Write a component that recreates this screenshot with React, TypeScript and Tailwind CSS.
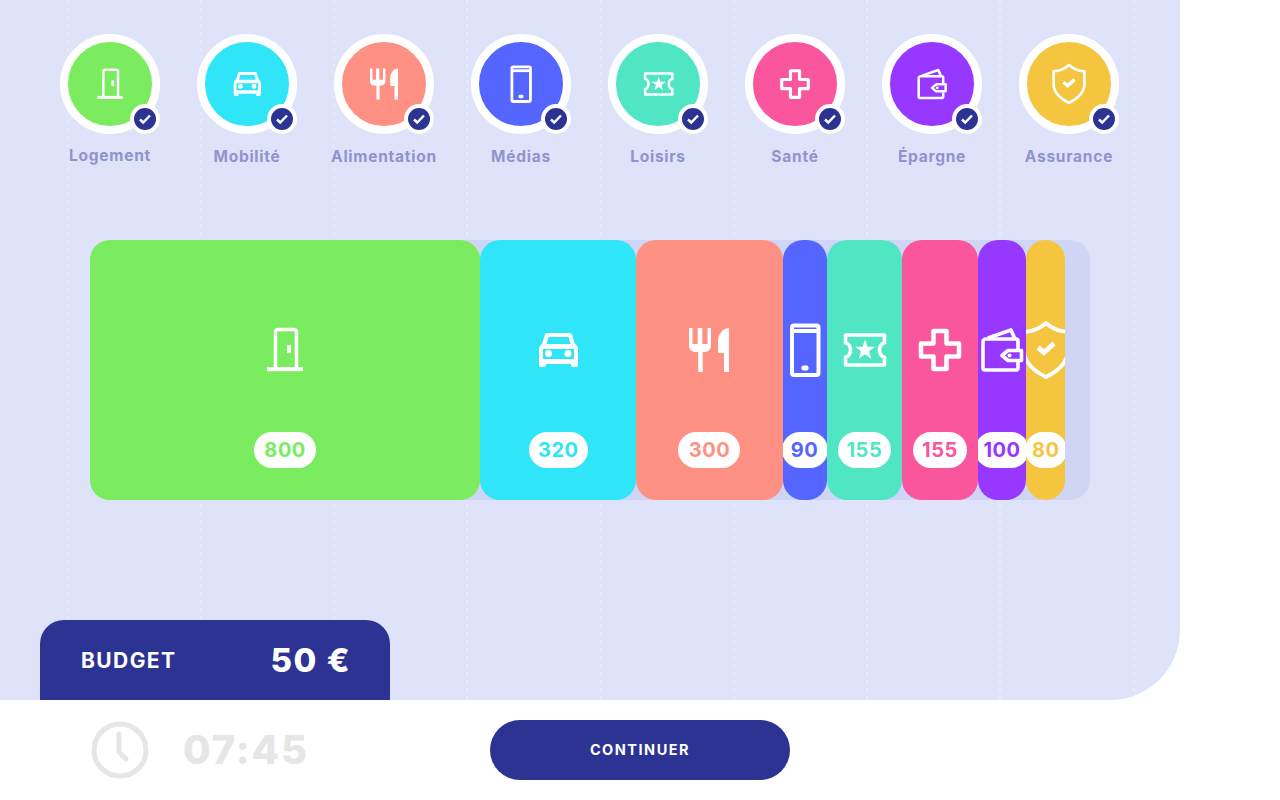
import React from "react";

const FONT = "font-['Inter','Liberation_Sans',sans-serif]";

const DoorIcon = () => (
  <>
    <path d="M20.500 47V12a2.500 2.500 0 0 1 2.500-2.500h16a2.500 2.500 0 0 1 2.500 2.500v35" fill="none" stroke="currentColor" strokeWidth="3.500" />
    <rect x="12" y="47" width="36" height="4.200" fill="currentColor" />
    <rect x="32" y="25" width="4" height="8" fill="currentColor" />
  </>
);

const CarIcon = () => (
  <>
    <path
      fillRule="evenodd"
      fill="currentColor"
      d="M19 13h23a2 2 0 0 1 2 1.500L47 24c2 1 3 3 3 5v16a2 2 0 0 1-2 2h-3a2 2 0 0 1-2-2v-1H18v1a2 2 0 0 1-2 2h-3a2 2 0 0 1-2-2V29c0-2 1-4 3-5l3-9.500A2 2 0 0 1 19 13zM20.500 17l-2 7h24l-2-7zM15 29v10h31V29z"
    />
    <circle cx="20.500" cy="33.500" r="3.500" fill="currentColor" />
    <circle cx="40" cy="33.500" r="3.500" fill="currentColor" />
  </>
);

const CutleryIcon = () => (
  <>
    <path
      fill="currentColor"
      d="M10 8h3.500v16h5.200V8h4.600v16h5.200V8H32v18a6 6 0 0 1-6 6h-2.300v20h-4.500V32H16a6 6 0 0 1-6-6z"
    />
    <path fill="currentColor" d="M50 8v44h-5V33h-6V22c0-8 5-14 11-14z" />
  </>
);

const PhoneIcon = () => (
  <>
    <rect x="17" y="5.500" width="26.500" height="49.500" rx="2" fill="none" stroke="currentColor" strokeWidth="4" />
    <rect x="17" y="9" width="26.500" height="4" fill="currentColor" />
    <rect x="26.500" y="45.500" width="7" height="5" rx="2" fill="currentColor" />
  </>
);

const TicketIcon = () => (
  <>
    <path
      d="M11.500 15h39v8a5 7 0 0 0 0 14v8h-39v-8a5 7 0 0 0 0-14z"
      fill="none"
      stroke="currentColor"
      strokeWidth="3.600"
      strokeLinejoin="round"
    />
    <polygon
      points="31,19.500 33.500,26.800 41,26.800 35,31.300 37.300,38.800 31,34.300 24.700,38.800 27,31.300 21,26.800 28.500,26.800"
      fill="currentColor"
    />
  </>
);

const PlusIcon = () => (
  <path
    d="M23.500 11h13v12.500H49v13H36.500V49h-13V36.500H11v-13h12.500z"
    fill="none"
    stroke="currentColor"
    strokeWidth="4.500"
    strokeLinejoin="round"
  />
);

const WalletIcon = () => (
  <>
    <path
      d="M46 29v-8a2 2 0 0 0-2-2H14a3 3 0 0 0-3 3v26a2 2 0 0 0 2 2h31a2 2 0 0 0 2-2v-6"
      fill="none"
      stroke="currentColor"
      strokeWidth="3.600"
    />
    <path d="M16 18l23-8 4 9" fill="none" stroke="currentColor" strokeWidth="3.600" strokeLinejoin="round" />
    <path
      d="M49.500 30.500H36l-6 5 6 5h13.500z"
      fill="none"
      stroke="currentColor"
      strokeWidth="3.600"
      strokeLinejoin="round"
    />
    <circle cx="37.500" cy="35.500" r="2" fill="currentColor" />
  </>
);

const ShieldIcon = () => (
  <>
    <path
      d="M30 3c6 5.500 14 8.500 22 9v18c0 12-10 21-22 27C18 51 8 42 8 30V12c8-.5 16-3.500 22-9z"
      fill="none"
      stroke="currentColor"
      strokeWidth="3.800"
      strokeLinejoin="round"
    />
    <path d="M22 27.500l6 5 10-9" fill="none" stroke="currentColor" strokeWidth="5" />
  </>
);

const categories = [
  { label: "Logement", value: 800, Icon: DoorIcon, bg: "bg-[#7bec5f]", text: "text-[#7bec5f]", width: "w-[390.24px]", pill: "w-[62px]", labelTop: "mt-[13px]" },
  { label: "Mobilité", value: 320, Icon: CarIcon, bg: "bg-[#2fe5f7]", text: "text-[#2fe5f7]", width: "w-[156.1px]", pill: "w-[59px]", labelTop: "mt-[14px]" },
  { label: "Alimentation", value: 300, Icon: CutleryIcon, bg: "bg-[#ff9084]", text: "text-[#ff9084]", width: "w-[146.34px]", pill: "w-[62px]", labelTop: "mt-[14px]" },
  { label: "Médias", value: 90, Icon: PhoneIcon, bg: "bg-[#5565ff]", text: "text-[#5565ff]", width: "w-[43.9px]", pill: "w-[46px]", labelTop: "mt-[14px]" },
  { label: "Loisirs", value: 155, Icon: TicketIcon, bg: "bg-[#50e6c3]", text: "text-[#50e6c3]", width: "w-[75.6px]", pill: "w-[53px]", labelTop: "mt-[14px]" },
  { label: "Santé", value: 155, Icon: PlusIcon, bg: "bg-[#fa569e]", text: "text-[#fa569e]", width: "w-[75.6px]", pill: "w-[54px]", labelTop: "mt-[14px]" },
  { label: "Épargne", value: 100, Icon: WalletIcon, bg: "bg-[#9638ff]", text: "text-[#9638ff]", width: "w-[48.5px]", pill: "w-[54px]", labelTop: "mt-[14px]" },
  { label: "Assurance", value: 80, Icon: ShieldIcon, bg: "bg-[#f5c53f]", text: "text-[#f5c53f]", width: "w-[39px]", pill: "w-[42px]", labelTop: "mt-[14px]" },
];

const guides = [0, 1, 2, 3, 4, 5, 6, 7, 8];

export default function App() {
  return (
    <div className={`w-[1280px] h-[800px] overflow-hidden bg-white ${FONT}`}>
      <div className="relative w-[1180px] h-[700px] bg-[#dfe3fa] rounded-br-[70px] flex flex-col">
        <div className="absolute inset-0 flex pl-[66.5px] gap-[131.25px]">
          {guides.map((g) => (
            <div
              key={g}
              className="h-full w-[2px] bg-[repeating-linear-gradient(to_bottom,rgba(255,255,255,0.3)_0,rgba(255,255,255,0.3)_3px,transparent_3px,transparent_8px)]"
            />
          ))}
        </div>

        <div className="relative h-[240px] pt-[34px] pl-[41.5px] flex items-start">
          {categories.map(({ label, Icon, bg, labelTop }) => (
            <div key={label} className="w-[137px] flex flex-col items-center">
              <div className={`relative w-[100px] h-[100px] rounded-full border-8 border-white ${bg} flex items-center justify-center text-white`}>
                <svg width="42" height="42" viewBox="0 0 60 60">
                  <Icon />
                </svg>
                <div className="absolute -right-2 -bottom-2 w-[30px] h-[30px] rounded-full border-4 border-white bg-[#2c3393] flex items-center justify-center">
                  <svg width="14" height="14" viewBox="0 0 14 14">
                    <path d="M2 7.500l3.200 3L12 3.500" fill="none" stroke="white" strokeWidth="2.400" />
                  </svg>
                </div>
              </div>
              <span className={`${labelTop} text-[15.5px] leading-[18px] font-bold tracking-[0.75px] text-[#8f93cf] whitespace-nowrap`}>
                {label}
              </span>
            </div>
          ))}
        </div>

        <div className="relative ml-[90px] w-[1000px] h-[260px] bg-[#cfd5f5] rounded-[20px] flex">
          {categories.map(({ label, value, Icon, bg, text, width, pill }) => (
            <div key={label} className={`${width} h-full shrink-0 rounded-[20px] overflow-hidden ${bg} pt-[80px] flex flex-col items-center text-white`}>
              <svg width="60" height="60" viewBox="0 0 60 60" className="shrink-0">
                <Icon />
              </svg>
              <div className={`mt-[52px] h-[36px] ${pill} shrink-0 rounded-full bg-white flex items-center justify-center text-[20px] font-bold tracking-[0.5px] ${text}`}>
                {value}
              </div>
            </div>
          ))}
        </div>

        <div className="relative mt-auto ml-[40px] w-[350px] h-[80px] rounded-t-[24px] bg-[#2c3393] pt-[2px] pl-[41px] pr-[39px] flex items-center justify-between text-white">
          <span className="text-[21px] font-bold tracking-[1.4px]">BUDGET</span>
          <span className="text-[33px] font-extrabold tracking-[1.5px]">50 €</span>
        </div>
      </div>

      <div className="h-[100px] pl-[91px] flex items-center">
        <svg width="58" height="58" viewBox="0 0 58 58" className="shrink-0">
          <circle cx="29" cy="29" r="26" fill="none" stroke="#e6e6e6" strokeWidth="5" />
          <path d="M28 13v18l7 7" fill="none" stroke="#e6e6e6" strokeWidth="5" strokeLinecap="round" strokeLinejoin="round" />
        </svg>
        <span className="ml-[34px] w-[124px] text-[40px] font-extrabold tracking-[1.8px] text-[#e6e6e6] whitespace-nowrap">07:45</span>
        <button className="ml-[183px] w-[300px] h-[60px] rounded-full bg-[#2c3393] text-white text-[14.5px] font-bold tracking-[1.5px]">
          CONTINUER
        </button>
      </div>
    </div>
  );
}
